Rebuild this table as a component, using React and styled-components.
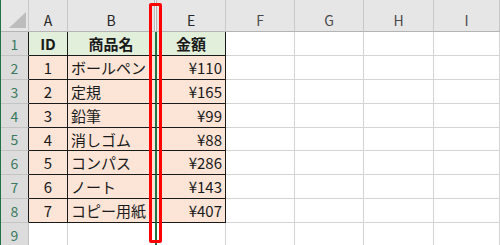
import React from 'react'
import styled, { createGlobalStyle } from 'styled-components'

const items = [
  { id: 1, name: 'ボールペン', price: '¥110' },
  { id: 2, name: '定規', price: '¥165' },
  { id: 3, name: '鉛筆', price: '¥99' },
  { id: 4, name: '消しゴム', price: '¥88' },
  { id: 5, name: 'コンパス', price: '¥286' },
  { id: 6, name: 'ノート', price: '¥143' },
  { id: 7, name: 'コピー用紙', price: '¥407' },
]

const HEAD_BG = '#e6e6e6'
const GRID = '#d4d4d4'
const GREEN = '#217346'
const TITLE_BG = '#e2efda'
const BODY_BG = '#fce4d6'

function App() {
  return (
    <>
      <GlobalStyle />
      <Frame>
        <Sheet>
          {/* column header row */}
          <Corner />
          <ColHead $active>A</ColHead>
          <ColHead $active $noRight>B</ColHead>
          <HiddenHead />
          <ColHead $active>E</ColHead>
          <ColHead>F</ColHead>
          <ColHead>G</ColHead>
          <ColHead>H</ColHead>
          <ColHead>I</ColHead>

          {/* row 1: table titles */}
          <RowHead $table>1</RowHead>
          <Cell $table $bg={TITLE_BG} $align="center" $bold>ID</Cell>
          <Cell $table $bg={TITLE_BG} $align="center" $bold $noRight>商品名</Cell>
          <HiddenCell $table $bg={TITLE_BG} />
          <Cell $table $bg={TITLE_BG} $align="center" $bold>金額</Cell>
          <Cell />
          <Cell />
          <Cell />
          <Cell />

          {items.map((item, idx) => (
            <React.Fragment key={item.id}>
              <RowHead $table>{idx + 2}</RowHead>
              <Cell $table $bg={BODY_BG} $align="center">{item.id}</Cell>
              <Cell $table $bg={BODY_BG} $noRight>{item.name}</Cell>
              <HiddenCell $table $bg={BODY_BG} />
              <Cell $table $bg={BODY_BG} $align="flex-end">{item.price}</Cell>
              <Cell />
              <Cell />
              <Cell />
              <Cell />
            </React.Fragment>
          ))}

          <RowHead>9</RowHead>
          <Cell />
          <Cell $noRight />
          <HiddenCell />
          <Cell />
          <Cell />
          <Cell />
          <Cell />
          <Cell />
        </Sheet>
        <Marker />
      </Frame>
    </>
  )
}

const GlobalStyle = createGlobalStyle`
  html, body {
    margin: 0;
    padding: 0;
    background: #ffffff;
  }
  body {
    width: 500px;
    height: 245px;
    overflow: hidden;
    font-family: 'Noto Sans CJK JP', 'Noto Sans', sans-serif;
  }
`

const Frame = styled.div`
  position: relative;
  width: 500px;
  height: 245px;
  overflow: hidden;
`

const Sheet = styled.div`
  display: grid;
  grid-template-columns: 28px 39px 86px 3px 69px 69px 69px 70px 66px;
  grid-template-rows: 32px 24px 24px 24px 24px 23px 24px 24px 24px 24px;
  border-left: 1px solid ${GREEN};
  width: 500px;
  box-sizing: border-box;
`

const Corner = styled.div`
  position: relative;
  background: ${HEAD_BG};
  border-right: 1px solid #c8c8c8;
  border-bottom: 1px solid #b4b4b4;
  box-sizing: border-box;

  &::after {
    content: '';
    position: absolute;
    right: 2px;
    bottom: 3px;
    width: 17px;
    height: 16px;
    background: #bdbdbd;
    clip-path: polygon(100% 0, 100% 100%, 0 100%);
  }
`

const ColHead = styled.div`
  display: flex;
  justify-content: center;
  align-items: center;
  padding-top: 8px;
  box-sizing: border-box;
  background: ${HEAD_BG};
  border-right: ${(p) => (p.$noRight ? 'none' : '1px solid #c8c8c8')};
  border-bottom: 1px solid #b4b4b4;
  color: ${(p) => (p.$active ? '#262626' : '#4a4a4a')};
  font-size: 14px;
  line-height: 1;
`

const HiddenHead = styled.div`
  background: #f4f4f4;
  border-left: 1px solid #b9b9b9;
  border-right: 1px solid #b9b9b9;
  border-bottom: 1px solid #b4b4b4;
  box-sizing: border-box;
`

const RowHead = styled.div`
  display: flex;
  justify-content: center;
  align-items: center;
  box-sizing: border-box;
  background: #dcdcdc;
  border-right: 1px solid ${(p) => (p.$table ? '#1a1a1a' : '#c0c0c0')};
  border-bottom: 1px solid #c4c4c4;
  color: #3b7a5f;
  font-size: 14px;
  line-height: 1;
`

const Cell = styled.div`
  display: flex;
  align-items: center;
  justify-content: ${(p) => p.$align || 'flex-start'};
  padding: 0 3px;
  box-sizing: border-box;
  min-width: 0;
  white-space: nowrap;
  background: ${(p) => p.$bg || '#ffffff'};
  border-right: ${(p) =>
    p.$noRight ? 'none' : `1px solid ${p.$table ? '#1a1a1a' : GRID}`};
  border-bottom: 1px solid ${(p) => (p.$table ? '#1a1a1a' : GRID)};
  color: #1a1a1a;
  font-size: 15px;
  font-weight: ${(p) => (p.$bold ? 700 : 400)};
  line-height: 1;
`

const HiddenCell = styled.div`
  box-sizing: border-box;
  background: ${(p) => p.$bg || '#ffffff'};
  border-right: 2px solid ${GREEN};
  border-bottom: 1px solid ${(p) => (p.$table ? '#1a1a1a' : GRID)};
`

// red callout around the hidden C:D columns
const Marker = styled.div`
  position: absolute;
  left: 149px;
  top: 3px;
  width: 13px;
  height: 240px;
  box-sizing: border-box;
  border: 3px solid #ff0000;
  border-radius: 2px;
  pointer-events: none;
`

export default App
